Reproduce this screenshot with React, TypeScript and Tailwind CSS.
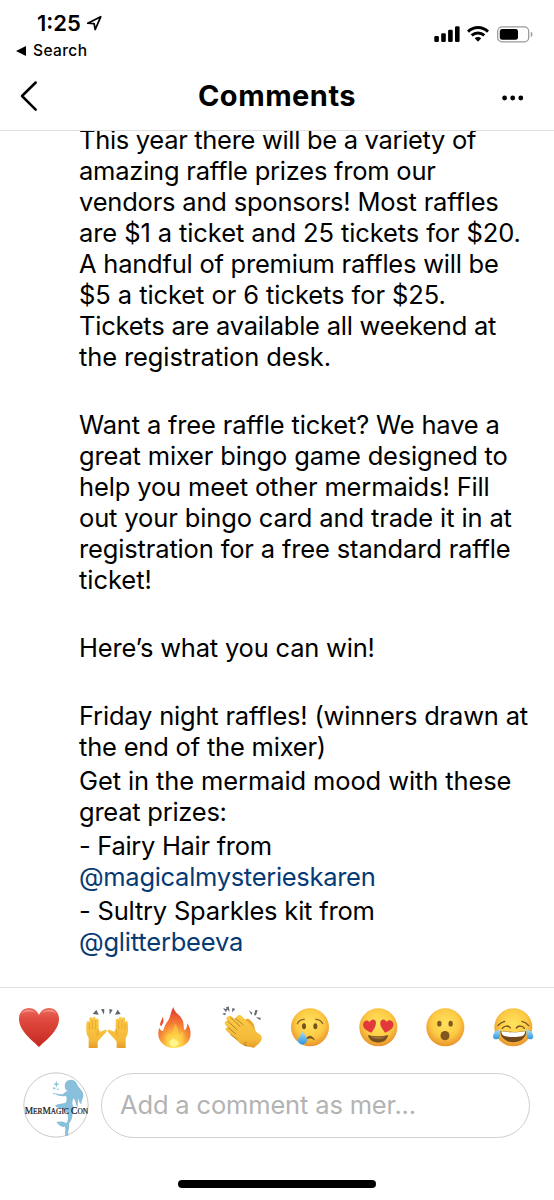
import type { ReactNode } from 'react'

type Line = { text: string; tracking?: string; mention?: boolean }

const paragraphs: Line[][] = [
  [
    { text: 'This year there will be a variety of', tracking: 'tracking-[-0.31px]' },
    { text: 'amazing raffle prizes from our', tracking: 'tracking-[-0.23px]' },
    { text: 'vendors and sponsors! Most raffles' },
    { text: 'are $1 a ticket and 25 tickets for $20.', tracking: 'tracking-[-0.1px]' },
    { text: 'A handful of premium raffles will be', tracking: 'tracking-[-0.23px]' },
    { text: '$5 a ticket or 6 tickets for $25.', tracking: 'tracking-[-0.08px]' },
    { text: 'Tickets are available all weekend at', tracking: 'tracking-[-0.23px]' },
    { text: 'the registration desk.', tracking: 'tracking-[-0.11px]' },
  ],
  [],
  [
    { text: 'Want a free raffle ticket? We have a', tracking: 'tracking-[-0.17px]' },
    { text: 'great mixer bingo game designed to', tracking: 'tracking-[-0.17px]' },
    { text: 'help you meet other mermaids! Fill', tracking: 'tracking-[-0.14px]' },
    { text: 'out your bingo card and trade it in at', tracking: 'tracking-[-0.13px]' },
    { text: 'registration for a free standard raffle', tracking: 'tracking-[-0.15px]' },
    { text: 'ticket!', tracking: 'tracking-[-0.05px]' },
  ],
  [],
  [{ text: 'Here’s what you can win!' }],
  [],
  [
    { text: 'Friday night raffles! (winners drawn at' },
    { text: 'the end of the mixer)' },
  ],
  [
    { text: 'Get in the mermaid mood with these', tracking: 'tracking-[-0.11px]' },
    { text: 'great prizes:', tracking: 'tracking-[-0.25px]' },
  ],
  [
    { text: '- Fairy Hair from', tracking: 'tracking-[-0.3px]' },
    { text: '@magicalmysterieskaren', tracking: 'tracking-[-0.3px]', mention: true },
  ],
  [
    { text: '- Sultry Sparkles kit from' },
    { text: '@glitterbeeva', mention: true },
  ],
]

function StatusBar() {
  return (
    <div className="flex h-[62px] justify-between">
      <div className="pl-4 pt-[11px]">
        <div className="flex items-center pl-[21px]">
          <span className="text-[22px] leading-[24px] font-semibold">1:25</span>
          <svg className="ml-[5px] size-4" viewBox="0 0 16 16" fill="none" stroke="black" strokeWidth="1.8" strokeLinejoin="round">
            <path d="M1.8 8.2 14.7 1.8 9.2 14.5 8.1 8.6Z" />
          </svg>
        </div>
        <div className="mt-[6px] flex items-center gap-[7px]">
          <svg className="h-[10px] w-[10px]" viewBox="0 0 10 10">
            <path d="M0 5 10 0V10Z" />
          </svg>
          <span className="text-[15.5px] leading-[20px] font-medium tracking-[0.4px]">Search</span>
        </div>
      </div>
      <div className="flex h-[18px] items-center pr-[20px] mt-[25px]">
        <svg className="h-[16px] w-[26px]" viewBox="0 0 26 16">
          <rect x="0.3" y="10" width="4.6" height="6" rx="1.3" />
          <rect x="7.2" y="7.2" width="4.6" height="8.8" rx="1.3" />
          <rect x="14.1" y="3.8" width="4.6" height="12.2" rx="1.3" />
          <rect x="21" y="0.3" width="4.6" height="15.7" rx="1.3" />
        </svg>
        <svg className="ml-[7px] h-[16px] w-[22px]" viewBox="0 0 22 16" fill="none" stroke="black" strokeWidth="2.9">
          <path d="M1 5.6C6.7.1 15.3.1 21 5.6" />
          <path d="M4.7 9.4C8.3 6.1 13.7 6.1 17.3 9.4" />
          <path d="M7.7 12.3C9.6 10.7 12.4 10.7 14.3 12.3L11 15.7Z" fill="black" stroke="none" />
        </svg>
        <svg className="ml-2 h-[17px] w-[37px]" viewBox="0 0 37 17">
          <rect x="0.7" y="0.9" width="31" height="15" rx="4.4" fill="none" stroke="#9a9a9a" strokeWidth="1.3" />
          <rect x="2.8" y="3" width="18.2" height="10.8" rx="2.4" />
          <path d="M33.8 5.7C36 6.5 36 10.3 33.8 11.1Z" fill="#9a9a9a" />
        </svg>
      </div>
    </div>
  )
}

function Header() {
  return (
    <header className="grid h-[69px] grid-cols-[1fr_auto_1fr] items-center border-b border-[#e0e0e0] pr-[29px] pl-[18px]">
      <svg className="h-[32px] w-[22px]" viewBox="0 0 22 32" fill="none" stroke="black" strokeWidth="2.5" strokeLinecap="round" strokeLinejoin="round">
        <path d="M17.7 2.5 4 16 17.7 29.7" />
      </svg>
      <h1 className="ml-[11px] text-[29px] leading-[34px] font-bold tracking-[0.5px]">Comments</h1>
      <svg className="mt-[3px] h-2 w-[24px] justify-self-end" viewBox="0 0 24 8">
        <circle cx="3.6" cy="4" r="2.4" />
        <circle cx="11.7" cy="4" r="2.4" />
        <circle cx="19.8" cy="4" r="2.4" />
      </svg>
    </header>
  )
}

function Emoji({ viewBox, children }: { viewBox: string; children: ReactNode }) {
  return (
    <svg className="size-12 shrink-0" viewBox={viewBox}>
      {children}
    </svg>
  )
}

function Gradients() {
  return (
    <svg className="absolute size-0">
      <defs>
        <radialGradient id="face" cx="0.5" cy="0.4" r="0.6">
          <stop offset="0" stopColor="#ffe35e" />
          <stop offset="0.6" stopColor="#fdcb45" />
          <stop offset="1" stopColor="#e8922b" />
        </radialGradient>
        <linearGradient id="heart" x1="0" y1="0" x2="0" y2="1">
          <stop offset="0" stopColor="#ec6a5c" />
          <stop offset="0.3" stopColor="#e04a3f" />
          <stop offset="1" stopColor="#c5281f" />
        </linearGradient>
        <linearGradient id="skin" x1="0" y1="0" x2="0" y2="1">
          <stop offset="0" stopColor="#fccb45" />
          <stop offset="0.75" stopColor="#f5b93a" />
          <stop offset="1" stopColor="#e59c26" />
        </linearGradient>
        <radialGradient id="flame" cx="0.5" cy="0.92" r="0.85">
          <stop offset="0" stopColor="#fff06c" />
          <stop offset="0.3" stopColor="#fdc53f" />
          <stop offset="0.62" stopColor="#f47b34" />
          <stop offset="1" stopColor="#e33f2c" />
        </radialGradient>
        <linearGradient id="tear" x1="0" y1="0" x2="0" y2="1">
          <stop offset="0" stopColor="#a9dff8" />
          <stop offset="1" stopColor="#2f95df" />
        </linearGradient>
      </defs>
    </svg>
  )
}

function QuickReactions() {
  return (
    <div className="flex h-[79px] items-center justify-between border-t border-[#e0e0e0] pr-[17px] pl-[15px]">
      <Gradients />
      <Emoji viewBox="45 69 144 144">
        <path d="M117 201C101 184 57 154 57 117C57 97 70 84 87 84C101 84 112 93 117 105C122 93 133 84 147 84C164 84 177 97 177 117C177 154 133 184 117 201Z" fill="url(#heart)" />
        <path d="M65 101C72 87 94 85 106 99C94 93 77 93 65 101ZM127 99C138 86 160 86 169 101C157 93 141 92 127 99Z" fill="#f6a79c" opacity="0.7" />
      </Emoji>
      <Emoji viewBox="248 69 144 144">
        <path d="M277 102 288 89 295 104ZM302 88 312 87 311 104ZM327 87 337 89 328 104ZM344 104 352 89 361 102Z" fill="#5d6673" />
        <g id="raised-hand">
          <path d="M265 204V174C258 165 257 151 258 134C258 121 266 119 267 129V119C267 109 275 109 276 118C276 108 286 108 286 118V121C287 113 295 114 295 122V148C297 157 303 155 312 150C319 147 322 153 316 158L298 178C294 182 292 185 292 190V204Z" fill="url(#skin)" />
          <path d="M267 130V148M276 119V146M286 121V147M295 148C291 154 290 160 291 166" fill="none" stroke="#dc9428" strokeWidth="1.8" strokeLinecap="round" />
        </g>
        <use href="#raised-hand" transform="translate(641 0) scale(-1 1)" />
      </Emoji>
      <Emoji viewBox="31 69 144 144">
        <path d="M67 189C55 178 53 160 59 143C62 150 65 153 70 153C74 141 77 133 86 121C93 109 92 98 101 81C104 98 121 104 128 119C134 129 130 143 135 151C140 147 143 139 143 130C152 142 154 158 152 169C149 188 132 203 105 204C90 204 76 200 67 189Z" fill="url(#flame)" />
        <path d="M62 137C60 126 67 122 68 111C75 122 70 130 66 137Z" fill="#ea4b34" />
        <path d="M84 194C74 183 77 168 88 158C91 167 95 168 99 153C103 142 106 137 104 129C115 139 114 151 119 163C124 163 126 157 127 151C135 164 131 184 119 197C108 204 95 203 84 194Z" fill="#ffd84b" opacity="0.5" />
        <path d="M90 194C86 184 94 180 101 174C106 180 115 180 117 190C112 203 98 203 90 194Z" fill="#fff899" opacity="0.85" />
      </Emoji>
      <Emoji viewBox="234 69 144 144">
        <path d="M246 101 258 98 255 106ZM249 85 262 88 258 97ZM257 83 266 79 269 96ZM277 84 286 87 276 97ZM326 91 337 98 335 105ZM342 106 346 90 353 91 348 106ZM347 112 362 113 361 121Z" fill="#626873" />
        <path d="M315 120C323 112 331 119 341 132L347 155L364 175L339 204L310 184Z" fill="#e9a62d" />
        <path d="M262 111C269 103 275 109 284 117L291 109C297 101 305 105 310 113L331 133C341 143 346 156 359 163C369 170 366 182 356 191L342 203C329 201 311 200 300 190L260 153C253 147 259 139 265 143L256 134C251 127 258 120 264 124L261 121C257 117 259 114 262 111Z" fill="url(#skin)" />
        <path d="M264 124 291 149M265 143 287 161M272 112 300 139M286 115 309 134M272 164 291 178M318 187C310 190 312 197 320 197" fill="none" stroke="#a9782a" strokeWidth="2.6" strokeLinecap="round" />
      </Emoji>
      <Emoji viewBox="18 69 144 144">
        <circle cx="90" cy="142" r="57" fill="url(#face)" />
        <ellipse cx="72" cy="139" rx="6" ry="9" fill="#76521e" />
        <ellipse cx="106" cy="139" rx="6" ry="9" fill="#76521e" />
        <path d="M52 131C56 123 64 118 73 118M107 118C117 118 124 123 128 131" fill="none" stroke="#85602a" strokeWidth="3.6" strokeLinecap="round" />
        <path d="M77 180C82 165 98 165 103 180C94 172 86 173 77 180Z" fill="#76521e" stroke="#76521e" strokeWidth="2" />
        <path d="M68 153C74 165 82 172 81 181C79 197 57 197 54 184C52 174 63 167 68 153Z" fill="url(#tear)" />
      </Emoji>
      <Emoji viewBox="221 69 144 144">
        <circle cx="294" cy="142" r="57" fill="url(#face)" />
        <path d="M273 158C259 153 244 143 249 129C252 120 263 119 268 127C272 116 286 115 287 128C287 140 279 149 273 158ZM314 158C308 149 298 139 300 127C302 116 315 116 318 126C324 118 336 120 339 130C342 143 329 153 314 158Z" fill="#e3393c" />
        <path d="M263 165C279 170 306 170 323 165C321 195 267 195 263 165Z" fill="#77501d" />
        <path d="M269 168C282 172 305 172 317 168C308 180 278 180 269 168Z" fill="#9a7241" />
      </Emoji>
      <Emoji viewBox="22 69 144 144">
        <circle cx="95" cy="142" r="57" fill="url(#face)" />
        <ellipse cx="77" cy="131" rx="6.5" ry="8.5" fill="#80581f" />
        <ellipse cx="111" cy="131" rx="6.5" ry="8.5" fill="#80581f" />
        <ellipse cx="94" cy="167" rx="13.5" ry="14" fill="#80581f" />
      </Emoji>
      <Emoji viewBox="225 69 144 144">
        <circle cx="298" cy="142" r="57" fill="url(#face)" />
        <path d="M252 137C257 130 263 126 272 124M324 124C333 126 339 130 344 137M265 145C271 136 284 136 289 144M307 144C313 136 326 136 331 145" fill="none" stroke="#76521e" strokeWidth="4" strokeLinecap="round" />
        <path d="M259 153C283 157 314 157 337 153C336 198 260 198 259 153Z" fill="#71491d" />
        <path d="M262 154C284 158 313 158 334 154C333 162 330 166 325 168C309 172 286 172 271 168C265 166 262 162 262 154Z" fill="#fff" />
        <path d="M259 148C249 150 236 160 237 171C239 181 254 180 257 170C259 164 258 155 259 148ZM337 148C348 150 359 160 358 171C356 181 342 180 339 170C337 164 338 155 337 148Z" fill="url(#tear)" />
      </Emoji>
    </div>
  )
}

function Avatar() {
  return (
    <svg className="size-[66px] shrink-0" viewBox="69 37 198 198">
      <circle cx="168" cy="136" r="96.5" fill="white" stroke="#c9c9c9" strokeWidth="3" />
      <g fill="#88bfda">
        <path d="M196 88C192 78 195 66 205 62C216 57 228 63 231 73C234 84 249 91 250 105C251 117 242 122 245 134C237 130 237 120 233 114C236 127 231 134 235 143C226 137 228 124 221 116C217 122 216 129 218 137C225 147 216 164 217 171C215 183 207 188 207 195C209 205 203 213 205 228L195 228C195 217 198 207 194 200C187 205 178 198 169 187C178 185 192 184 199 191C205 182 206 172 201 161C197 148 175 147 165 139C175 129 190 135 198 128C202 119 199 113 198 108C188 112 176 109 166 104L157 102C164 98 173 103 184 104C192 104 194 96 203 94C200 91 197 92 196 88Z" />
        <path d="M169 63 171 71 179 74 171 76 169 84 167 76 160 73 167 71ZM162 80 164 84 168 86 164 87 162 91 161 87 157 85 161 84ZM174 85 175 88 178 89 175 90 174 93 173 90 170 89 173 88Z" />
      </g>
      <text x="74" y="164" textLength="190" lengthAdjust="spacingAndGlyphs" fill="#171717" stroke="#171717" strokeWidth="0.7" className="font-['Liberation_Serif',serif] text-[32px]">
        M<tspan className="text-[25px]">ER</tspan>M<tspan className="text-[25px]">AGIC</tspan> C<tspan className="text-[25px]">ON</tspan>
      </text>
    </svg>
  )
}

export default function App() {
  return (
    <div className="flex h-[1200px] w-[554px] flex-col overflow-hidden bg-white font-['Inter',sans-serif] text-black">
      <StatusBar />
      <Header />

      <main className="h-[856px] shrink-0 overflow-hidden pl-[79px] text-[25.5px] leading-[31px]">
        <div className="-mt-[7px] flex flex-col gap-[3px]">
          {paragraphs.map((lines, i) => (
            <div key={i} className="min-h-[31px]">
              {lines.map((line) => (
                <div key={line.text} className="whitespace-nowrap">
                  <span className={`${line.tracking ?? 'tracking-[-0.2px]'} ${line.mention ? 'text-[#063a75]' : ''}`}>{line.text}</span>
                </div>
              ))}
            </div>
          ))}
        </div>
      </main>

      <QuickReactions />

      <div className="mt-[6px] flex items-center gap-[12px] pl-[23px]">
        <Avatar />
        <div className="flex h-[65px] w-[429px] items-center rounded-full border border-[#cfcfcf] pl-[18px] text-[25.5px] text-[#b3b3b3]">
          <span className="tracking-[-0.16px]">Add a comment as mer...</span>
        </div>
      </div>

      <div className="mt-[42px] ml-[178px] h-2 w-[198px] rounded-full bg-black" />
    </div>
  )
}
